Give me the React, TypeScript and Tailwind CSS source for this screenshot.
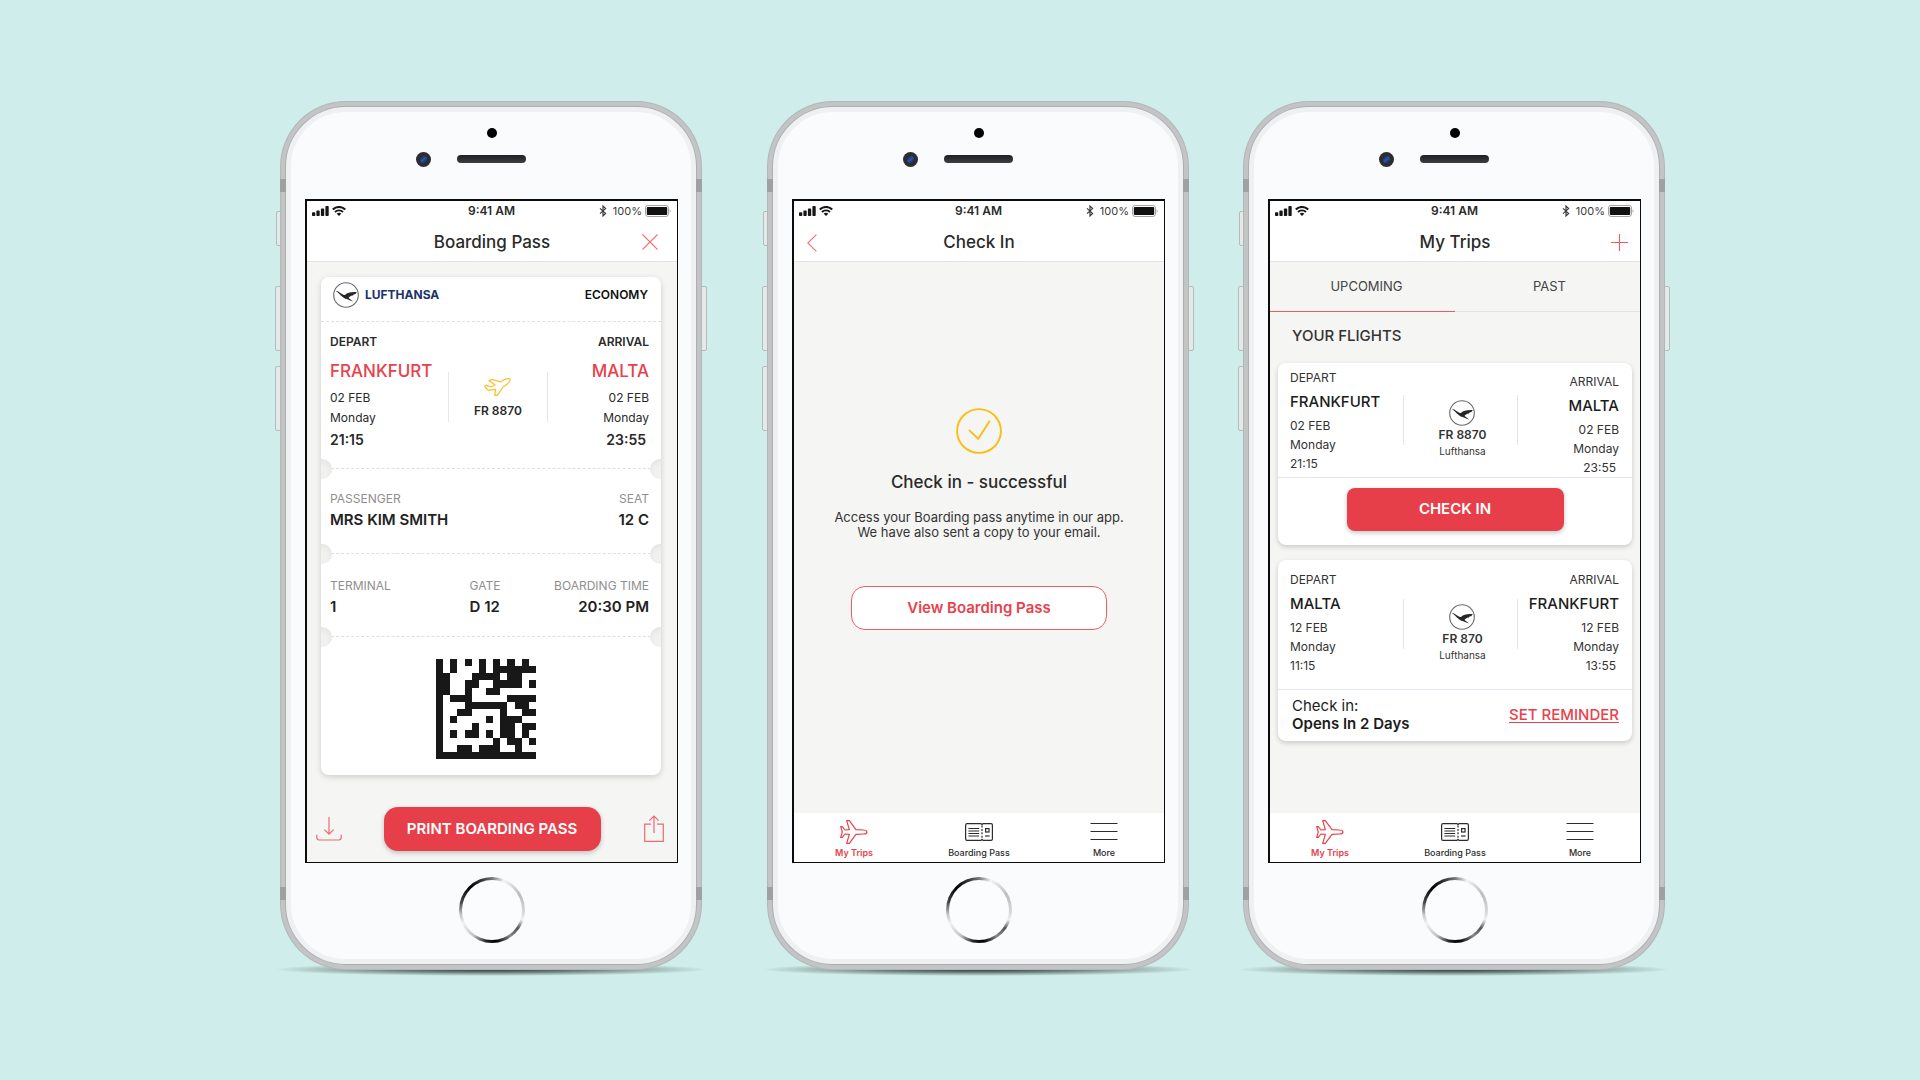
import type { ReactNode } from "react";

const MATRIX = [
  "10101010101010",
  "10100010111111",
  "11000111101100",
  "11001100111101",
  "11001001100000",
  "10111000001111",
  "10001111110110",
  "10011000010011",
  "10100001011100",
  "10000100011011",
  "10101101011010",
  "10000000101101",
  "10011011100100",
  "11111111111111",
];

function SignalIcon() {
  return (
    <svg className="h-[10px] w-[17px] fill-[#161616]" viewBox="0 0 17 10" aria-hidden="true">
      <rect x="0" y="6.2" width="3.3" height="3.8" rx="0.8" />
      <rect x="4.4" y="4.6" width="3.3" height="5.4" rx="0.8" />
      <rect x="8.9" y="2.6" width="3.3" height="7.4" rx="0.8" />
      <rect x="13.4" y="0" width="3.3" height="10" rx="0.8" />
    </svg>
  );
}

function WifiIcon() {
  return (
    <svg className="h-[10px] w-[14px]" viewBox="0 0 14 10" fill="none" stroke="#161616" aria-hidden="true">
      <path d="M0.8 3.6C4.3 0.1 9.7 0.1 13.2 3.6" strokeWidth="2.1" />
      <path d="M3 6C5.2 3.8 8.8 3.8 11 6" strokeWidth="1.9" />
      <path d="M7 9.9L4.7 7.7C6 6.5 8 6.5 9.3 7.7Z" fill="#161616" stroke="none" />
    </svg>
  );
}

function BluetoothIcon() {
  return (
    <svg className="h-[12px] w-[8px]" viewBox="0 0 8 12" fill="none" stroke="#3a3a3a" strokeWidth="1.2" aria-hidden="true">
      <path d="M1 3.4L6.6 8.4L4 10.9V1.1L6.6 3.6L1 8.6" />
    </svg>
  );
}

function BatteryIcon() {
  return (
    <svg className="h-[12px] w-[26px]" viewBox="0 0 26 12" aria-hidden="true">
      <rect x="0.5" y="0.5" width="23" height="11" rx="2.6" fill="#fff" stroke="#a3a3a3" />
      <rect x="1.8" y="2" width="20.4" height="8" rx="1" fill="#111" />
      <path d="M24.6 4.2C26 4.8 26 7.2 24.6 7.8Z" fill="#a3a3a3" />
    </svg>
  );
}

function CraneLogo() {
  return (
    <svg className="size-[26px] shrink-0" viewBox="0 0 26 26" aria-hidden="true">
      <circle cx="13" cy="13" r="12.3" fill="#fff" stroke="#6b6b6b" strokeWidth="1.1" />
      <path
        d="M2.6 8.8L5.2 9.4C7.6 11 9.6 12.7 12 13C14.4 10.6 17.8 9.8 23.8 10.1L22.2 12.2L20.8 12.3L20 13.6L18.2 13.7L16 15.2L15.6 15.9L20.2 19.4L18 18.8L13.6 17C9.8 16.6 8.4 13.2 2.6 8.8Z"
        fill="#262626"
      />
    </svg>
  );
}

function TakeoffIcon() {
  return (
    <svg className="h-[18px] w-[27px] shrink-0" viewBox="0 0 81 54" fill="none" stroke="#f8bf2c" strokeWidth="3.6" strokeLinejoin="round" aria-hidden="true">
      <path d="M79 3C70 0 61 4 50 12L24 4L15 8L33 20L21 27L8 22L2 25L13 37L35 34L32 52L40 52L57 27C68 21 78 12 79 3Z" />
    </svg>
  );
}

function PlaneIcon() {
  return (
    <svg className="h-[24px] w-[28px]" viewBox="-1 -1 84 72" fill="none" stroke="currentColor" strokeWidth="3.6" strokeLinejoin="round" aria-hidden="true">
      <path d="M70 29L47 28L27 1L19 1L27 28L14 29L6 19L1 19L6 35L1 51L6 51L14 41L27 42L19 69L27 69L47 42L70 41C83 41 83 29 70 29Z" />
    </svg>
  );
}

function TicketIcon() {
  return (
    <svg className="h-[24px] w-[28px]" viewBox="0 0 28 24" fill="none" stroke="currentColor" strokeWidth="1.2" aria-hidden="true">
      <path d="M2 3.6H16L17 4.6L18 3.6H26C26.8 3.6 27.4 4.2 27.4 5V19C27.4 19.8 26.8 20.4 26 20.4H18L17 19.4L16 20.4H2C1.2 20.4 0.6 19.8 0.6 19V5C0.6 4.2 1.2 3.6 2 3.6Z" />
      <path d="M17 5.5V19" strokeDasharray="2 1.4" />
      <path d="M3.4 8.5H14.2M3.4 11H14.2M3.4 13.5H14.2M3.4 16H14.2" strokeWidth="1" />
      <rect x="20.6" y="8.6" width="3.4" height="3.4" />
      <path d="M20 16H24.6" />
    </svg>
  );
}

function MenuIcon() {
  return (
    <svg className="h-[24px] w-[28px]" viewBox="0 0 28 24" stroke="currentColor" strokeWidth="1.2" aria-hidden="true">
      <path d="M0.5 3.5H27.5M0.5 11.5H27.5M0.5 19.5H27.5" />
    </svg>
  );
}

function DataMatrix() {
  return (
    <svg className="size-[100px]" viewBox="0 0 14 14" role="img" aria-label="Boarding code" shapeRendering="crispEdges">
      {MATRIX.map((row, y) =>
        row.split("").map((cell, x) =>
          cell === "1" ? <rect key={`${x}-${y}`} x={x} y={y} width="1" height="1" fill="#181818" /> : null,
        ),
      )}
    </svg>
  );
}

function StatusBar() {
  return (
    <div className="grid h-[21px] grid-cols-3 items-center pr-1.5 pl-[5px]">
      <div className="flex items-center gap-[3px]">
        <SignalIcon />
        <WifiIcon />
      </div>
      <div className="text-center text-[12px] leading-4 font-semibold text-[#2b2b2b]">9:41 AM</div>
      <div className="flex items-center justify-end gap-[3px]">
        <BluetoothIcon />
        <span className="ml-[3px] text-[11px] leading-4 text-[#3a3a3a]">100%</span>
        <BatteryIcon />
      </div>
    </div>
  );
}

function TitleBar({ title, left, right }: { title: string; left?: ReactNode; right?: ReactNode }) {
  return (
    <div className="grid h-10 grid-cols-[32px_1fr_32px] items-center border-b border-[#e4e4e6] px-1.5 pt-0.5">
      <div className="flex pl-[3px]">{left}</div>
      <h1 className="text-center text-[17px] leading-6 font-medium text-[#2a2a2a]">{title}</h1>
      <div className="flex justify-end">{right}</div>
    </div>
  );
}

function Phone({ children, className = "" }: { children: ReactNode; className?: string }) {
  return (
    <article className={`relative isolate max-w-[422px] flex-1 ${className}`}>
      <div className="absolute -inset-x-[6px] -bottom-[6px] -z-20 h-[13px] bg-[radial-gradient(closest-side,#2c3836,#55645fcc_45%,transparent)]" />
      <div className="absolute top-[110px] -left-[4px] -z-10 h-[35px] w-3 rounded-[2px] border border-[#b4bbbb] bg-[#e4eaea]" />
      <div className="absolute top-[185px] -left-[5px] -z-10 h-[65px] w-3 rounded-[2px] border border-[#b4bbbb] bg-[#e4eaea]" />
      <div className="absolute top-[265px] -left-[5px] -z-10 h-[65px] w-3 rounded-[2px] border border-[#b4bbbb] bg-[#e4eaea]" />
      <div className="absolute top-[185px] -right-[5px] -z-10 h-[65px] w-3 rounded-[2px] border border-[#b4bbbb] bg-[#e4eaea]" />
      <div className="rounded-[66px] bg-[#b5b6b8] p-px">
        <div className="rounded-[65px] bg-[#c3c4c6] p-[4px]">
          <div className="rounded-[61px] bg-[#adaeb0] p-px">
            <div className="flex flex-col rounded-[60px] border-[5px] border-[#eff0f2] bg-[#fafbfd] pr-[13px] pb-4 pl-[14px]">
              <div className="mx-auto mt-4 size-[10px] rounded-full bg-black" />
              <div className="mt-[14px] mb-8 grid grid-cols-[1fr_69px_1fr] items-center">
                <div className="mr-[26px] flex size-[15px] items-center justify-center justify-self-end rounded-full bg-[#2b2d31]">
                  <div className="size-[7px] rounded-full bg-[linear-gradient(135deg,#0f1b33,#2c55a8,#0f1b33)]" />
                </div>
                <div className="h-[8px] rounded-full bg-[linear-gradient(#1d1f22,#3c3f42)]" />
              </div>
              <div className="flex min-h-[664px] flex-col border-t-2 border-r border-b border-l-2 border-[#0c0c0c] bg-[#f5f5f3]">
                {children}
              </div>
              <button
                type="button"
                aria-label="Home"
                className="mx-auto mt-[14px] size-[66px] rounded-full bg-[conic-gradient(#777_0deg,#f4f4f5_22deg,#bdbdbf_60deg,#d8d8da_95deg,#f1f1f2_108deg,#555_125deg,#8a8a8a_145deg,#000_172deg,#222_190deg,#c2c2c4_215deg,#f3f3f4_245deg,#c4c4c6_262deg,#444_285deg,#000_315deg,#333_340deg,#777_360deg)] p-[3px]"
              >
                <span className="block size-full rounded-full bg-[#fbfcfe]" />
              </button>
            </div>
          </div>
        </div>
      </div>
      <div className="absolute top-[78px] left-0 h-[13px] w-[6px] bg-[#9fa0a2]" />
      <div className="absolute top-[78px] right-0 h-[13px] w-[6px] bg-[#9fa0a2]" />
      <div className="absolute bottom-[70px] left-0 h-[13px] w-[6px] bg-[#9fa0a2]" />
      <div className="absolute right-0 bottom-[70px] h-[13px] w-[6px] bg-[#9fa0a2]" />
    </article>
  );
}

function TabBar() {
  return (
    <nav className="mt-auto grid grid-cols-[12fr_13fr_12fr] bg-white pt-[7px] pb-0.5">
      <button type="button" className="flex flex-col items-center gap-0.5 text-[#e8414b]">
        <PlaneIcon />
        <span className="text-[9px] leading-[14px] font-semibold">My Trips</span>
      </button>
      <button type="button" className="flex flex-col items-center gap-0.5 text-[#2c2c2c]">
        <TicketIcon />
        <span className="text-[9px] leading-[14px] font-medium">Boarding Pass</span>
      </button>
      <button type="button" className="flex flex-col items-center gap-0.5 text-[#2c2c2c]">
        <MenuIcon />
        <span className="text-[9px] leading-[14px] font-medium">More</span>
      </button>
    </nav>
  );
}

function Tear() {
  return (
    <div className="relative border-t border-dashed border-[#dedfe2]">
      <div className="absolute -top-[10px] left-0 h-5 w-[11px] rounded-r-full bg-[radial-gradient(circle_at_0%_65%,#f1f1ef_35%,#dfdfde)]" />
      <div className="absolute -top-[10px] right-0 h-5 w-[11px] rounded-l-full bg-[radial-gradient(circle_at_100%_65%,#f1f1ef_35%,#dfdfde)]" />
    </div>
  );
}

function Field({ label, value, align = "" }: { label: string; value: string; align?: string }) {
  return (
    <div className={align}>
      <div className="text-[12px] leading-4 whitespace-nowrap text-[#8f8f8f]">{label}</div>
      <div className="mt-[3px] text-[15px] leading-5 font-semibold whitespace-nowrap text-[#222]">{value}</div>
    </div>
  );
}

function BoardingPassScreen() {
  return (
    <>
      <header className="bg-white">
        <StatusBar />
        <TitleBar
          title="Boarding Pass"
          right={
            <button type="button" aria-label="Close" className="mr-[13px] shrink-0">
              <svg className="size-4" viewBox="0 0 16 16" stroke="#f07078" strokeWidth="1.1" aria-hidden="true">
                <path d="M0.5 0.5L15.5 15.5M15.5 0.5L0.5 15.5" />
              </svg>
            </button>
          }
        />
      </header>
      <section className="mt-[15px] mr-4 ml-[14px] rounded-lg bg-white shadow-[0_2px_6px_rgba(0,0,0,0.16)]">
        <div className="flex items-center justify-between border-b border-dashed border-[#dedfe2] pt-[5px] pr-[13px] pb-[13px] pl-3">
          <div className="flex items-center gap-1.5">
            <CraneLogo />
            <span className="text-[12px] leading-4 font-bold text-[#1b3468]">LUFTHANSA</span>
          </div>
          <span className="text-[12px] leading-4 font-semibold text-[#111]">ECONOMY</span>
        </div>
        <div className="grid grid-cols-[7fr_6fr_6fr] pt-3 pr-3 pb-4 pl-[9px] text-[#2a2a2a]">
          <div>
            <div className="text-[12px] leading-4 font-semibold">DEPART</div>
            <div className="mt-[9px] text-[17px] leading-6 font-medium text-[#e8414b]">FRANKFURT</div>
            <div className="mt-[5px] text-[12px] leading-5">02 FEB</div>
            <div className="text-[12px] leading-5">Monday</div>
            <div className="text-[14px] leading-6 font-semibold">21:15</div>
          </div>
          <div className="mt-[38px] flex h-[50px] flex-col items-center border-x border-[#e6e6ee] pt-[6px]">
            <TakeoffIcon />
            <div className="mt-[5px] text-[12px] leading-5 font-semibold">FR 8870</div>
          </div>
          <div className="text-right">
            <div className="text-[12px] leading-4 font-semibold">ARRIVAL</div>
            <div className="mt-[9px] text-[17px] leading-6 font-medium text-[#e8414b]">MALTA</div>
            <div className="mt-[5px] text-[12px] leading-5">02 FEB</div>
            <div className="text-[12px] leading-5">Monday</div>
            <div className="pr-[3px] text-[14px] leading-6 font-semibold">23:55</div>
          </div>
        </div>
        <Tear />
        <div className="flex justify-between pt-[22px] pr-3 pb-[23px] pl-[9px]">
          <Field label="PASSENGER" value="MRS KIM SMITH" />
          <Field label="SEAT" value="12 C" align="text-right" />
        </div>
        <Tear />
        <div className="grid grid-cols-[14fr_8fr_10fr] pt-6 pr-3 pb-[19px] pl-[9px]">
          <Field label="TERMINAL" value="1" />
          <Field label="GATE" value="D 12" />
          <Field label="BOARDING TIME" value="20:30 PM" align="text-right" />
        </div>
        <Tear />
        <div className="flex justify-center pt-[22px] pr-[11px] pb-4">
          <DataMatrix />
        </div>
      </section>
      <div className="mt-auto grid grid-cols-[1fr_217px_1fr] items-center px-[9px] pb-[11px]">
        <button type="button" aria-label="Download" className="justify-self-start">
          <svg className="h-[26px] w-[26px]" viewBox="0 0 26 26" fill="none" stroke="#ee6a72" strokeWidth="1.2" aria-hidden="true">
            <path d="M13 1V18M8.4 13.6L13 18.2L17.6 13.6" />
            <path d="M0.8 18.8V21.6C0.8 23 1.6 24 3 24H23C24.4 24 25.2 23 25.2 21.6V18.8" />
          </svg>
        </button>
        <button
          type="button"
          className="h-[44px] rounded-[14px] bg-[#e73f49] text-[15px] leading-5 font-semibold whitespace-nowrap text-white shadow-[0_2px_5px_rgba(0,0,0,0.22)]"
        >
          PRINT BOARDING PASS
        </button>
        <button type="button" aria-label="Share" className="mr-1 justify-self-end">
          <svg className="h-[27px] w-5" viewBox="0 0 20 27" fill="none" stroke="#ee6a72" strokeWidth="1.2" aria-hidden="true">
            <path d="M7 9.2H0.7V26.3H19.3V9.2H13" />
            <path d="M10 18V1.2M5.4 5.6L10 1L14.6 5.6" />
          </svg>
        </button>
      </div>
    </>
  );
}

function CheckInScreen() {
  return (
    <>
      <header className="bg-white">
        <StatusBar />
        <TitleBar
          title="Check In"
          left={
            <button type="button" aria-label="Back" className="ml-1 shrink-0 pt-0.5">
              <svg className="h-[18px] w-[10px]" viewBox="0 0 10 18" fill="none" stroke="#f07078" strokeWidth="1.1" aria-hidden="true">
                <path d="M9.4 0.6L0.8 9L9.4 17.4" />
              </svg>
            </button>
          }
        />
      </header>
      <section className="flex flex-col items-center pt-[146px] text-center">
        <svg className="size-[46px]" viewBox="0 0 46 46" fill="none" stroke="#f9be12" strokeWidth="1.9" strokeLinecap="round" aria-hidden="true">
          <circle cx="23" cy="23" r="21.9" />
          <path d="M13.6 22.6L22.2 30.8L33.4 13.6" />
        </svg>
        <h2 className="mt-4 text-[17px] leading-6 font-medium text-[#2a2a2a]">Check in - successful</h2>
        <p className="mt-4 text-[13px] leading-[15px] whitespace-nowrap text-[#333]">
          Access your Boarding pass anytime in our app.
          <br />
          We have also sent a copy to your email.
        </p>
        <button
          type="button"
          className="mt-[46px] h-[44px] w-64 rounded-[14px] border border-[#ee5d67] bg-white text-[15px] leading-5 font-semibold text-[#e8414b]"
        >
          View Boarding Pass
        </button>
      </section>
      <TabBar />
    </>
  );
}

type Stop = { city: string; date: string; day: string; time: string };

function FlightRoute({
  depart,
  arrival,
  flight,
  className,
  dividerClass,
  arrivalClass = "",
}: {
  depart: Stop;
  arrival: Stop;
  flight: string;
  className: string;
  dividerClass: string;
  arrivalClass?: string;
}) {
  return (
    <div className={`grid grid-cols-[113fr_116fr_101fr] border-b border-[#e6e6f0] pr-[13px] pl-3 text-[#333] ${className}`}>
      <div>
        <div className="text-[12px] leading-4">DEPART</div>
        <div className="mt-1.5 text-[15px] leading-5 font-medium text-[#1c1c1c]">{depart.city}</div>
        <div className="mt-1 text-[12px] leading-[19px]">{depart.date}</div>
        <div className="text-[12px] leading-[19px]">{depart.day}</div>
        <div className="text-[12px] leading-[19px]">{depart.time}</div>
      </div>
      <div className={`flex h-[50px] flex-col items-center border-x border-[#e6e6ee] pt-[5px] pl-1 ${dividerClass}`}>
        <CraneLogo />
        <div className="text-[12px] leading-[18px] font-semibold">{flight}</div>
        <div className="text-[10px] leading-[14px]">Lufthansa</div>
      </div>
      <div className={`text-right ${arrivalClass}`}>
        <div className="text-[12px] leading-4">ARRIVAL</div>
        <div className="mt-1.5 text-[15px] leading-5 font-medium text-[#1c1c1c]">{arrival.city}</div>
        <div className="mt-1 text-[12px] leading-[19px]">{arrival.date}</div>
        <div className="text-[12px] leading-[19px]">{arrival.day}</div>
        <div className="pr-[3px] text-[12px] leading-[19px]">{arrival.time}</div>
      </div>
    </div>
  );
}

function MyTripsScreen() {
  return (
    <>
      <header className="bg-white">
        <StatusBar />
        <TitleBar
          title="My Trips"
          right={
            <button type="button" aria-label="Add trip" className="mr-1.5 shrink-0">
              <svg className="size-[17px]" viewBox="0 0 17 17" stroke="#ec5a64" strokeWidth="1.1" aria-hidden="true">
                <path d="M8.5 0V17M0 8.5H17" />
              </svg>
            </button>
          }
        />
      </header>
      <div role="tablist" className="grid grid-cols-2 text-[13px] leading-5 text-[#444]">
        <button type="button" role="tab" aria-selected="true" className="h-[50px] border-b border-[#ec5a64] pl-2">
          UPCOMING
        </button>
        <button type="button" role="tab" aria-selected="false" className="h-[50px] border-b border-[#e2e2ea] pl-1">
          PAST
        </button>
      </div>
      <h2 className="mt-3 mb-[15px] ml-[22px] text-[15px] leading-6 font-medium text-[#333]">YOUR FLIGHTS</h2>
      <section className="mx-2 rounded-lg bg-white shadow-[0_2px_5px_rgba(0,0,0,0.18)]">
        <FlightRoute
          depart={{ city: "FRANKFURT", date: "02 FEB", day: "Monday", time: "21:15" }}
          arrival={{ city: "MALTA", date: "02 FEB", day: "Monday", time: "23:55" }}
          flight="FR 8870"
          className="pt-[7px]"
          dividerClass="mt-[25px]"
          arrivalClass="pt-1"
        />
        <div className="flex justify-center pt-[10px] pb-[14px]">
          <button
            type="button"
            className="h-[43px] w-[217px] rounded-lg bg-[#e73f49] text-[15px] leading-5 font-semibold text-white shadow-[0_2px_5px_rgba(0,0,0,0.22)]"
          >
            CHECK IN
          </button>
        </div>
      </section>
      <section className="mx-2 mt-[15px] rounded-lg bg-white shadow-[0_2px_5px_rgba(0,0,0,0.18)]">
        <FlightRoute
          depart={{ city: "MALTA", date: "12 FEB", day: "Monday", time: "11:15" }}
          arrival={{ city: "FRANKFURT", date: "12 FEB", day: "Monday", time: "13:55" }}
          flight="FR 870"
          className="pt-3 pb-[14px]"
          dividerClass="mt-[27px]"
        />
        <div className="flex items-center justify-between pt-[7px] pr-[13px] pb-2 pl-[14px]">
          <div className="text-[15px] leading-[18px] text-[#1c1c1c]">
            <div>Check in:</div>
            <div className="font-semibold">Opens In 2 Days</div>
          </div>
          <a href="#reminder" className="text-[15px] leading-5 font-medium text-[#e8414b] underline underline-offset-2">
            SET REMINDER
          </a>
        </div>
      </section>
      <TabBar />
    </>
  );
}

export default function App() {
  return (
    <main className="flex min-h-screen items-center justify-center gap-[54px] bg-[#cfedea] pb-[10px] pl-[25px] font-['Inter',sans-serif]">
      <Phone className="mr-[11px]">
        <BoardingPassScreen />
      </Phone>
      <Phone>
        <CheckInScreen />
      </Phone>
      <Phone>
        <MyTripsScreen />
      </Phone>
    </main>
  );
}
